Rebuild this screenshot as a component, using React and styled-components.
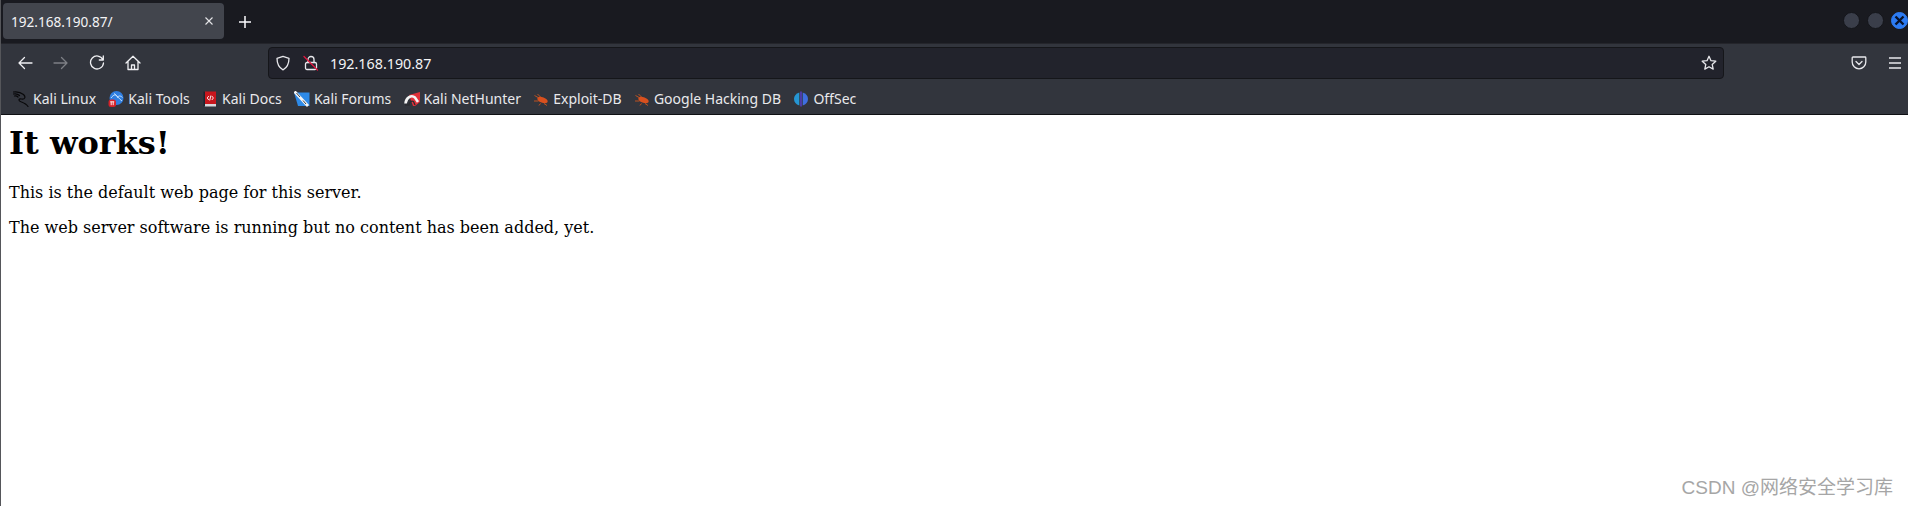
import React from "react";
import styled, { createGlobalStyle } from "styled-components";

const Global = createGlobalStyle`
  html, body { margin: 0; padding: 0; background: #fff; }
  #root { width: 1908px; height: 506px; overflow: hidden; }
`;
const UI = `"Noto Sans", "Open Sans", sans-serif`;

const Window = styled.div`
  position: relative; width: 1908px; height: 506px; overflow: hidden;
  display: flex; flex-direction: column; background: #fff;
  border-left: 1px solid #55565a; box-sizing: border-box;
`;
const TabBar = styled.div`
  height: 43px; flex: none; box-sizing: border-box; background: #191a20;
  display: flex; align-items: flex-start; padding: 3px 0 0 2px;
`;
const Tab = styled.div`
  width: 221px; height: 36px; box-sizing: border-box; border-radius: 4px; background: #42454d;
  color: #f3f3f5; font: 13.6px ${UI}; display: flex; align-items: center;
  justify-content: space-between; padding: 0 10px 0 8px;
`;
const NewTab = styled.div`
  width: 16px; height: 16px; margin: 11px 0 0 13px; color: #fbfbfe; display: flex;
`;
const WindowControls = styled.div`
  margin-left: auto; margin-top: 9px; display: flex; gap: 7px; flex: none;
`;
const Dot = styled.div`
  width: 17px; height: 17px; border-radius: 50%; flex: none; box-sizing: border-box;
  background: ${p => (p.$active ? "#2c7bf2" : "#3a3e4a")};
  border: 1px solid ${p => (p.$active ? "#2c7bf2" : "#14151a")};
  display: flex; align-items: center; justify-content: center;
`;
const NavBar = styled.div`
  height: 38px; flex: none; box-sizing: border-box; background: #32353d; border-top: 1px solid #24252b;
  padding: 1px 4px 0 16px; display: flex; align-items: center;
`;
const NavButton = styled.div`
  width: 16px; height: 16px; margin-right: ${p => p.$gap ?? 20}px; display: flex; flex: none;
  color: ${p => (p.$dim ? "#7d7f85" : "#f0f0f3")};
`;
const UrlBar = styled.div`
  width: 1456px; height: 32px; margin-left: 127px; flex: none; box-sizing: border-box;
  border: 1px solid #15161a; border-radius: 4px; background: #22232c; color: #f3f3f5;
  display: flex; align-items: center; padding: 0 6px; font: 14.3px ${UI};
`;
const UrlIcon = styled.div`
  width: 16px; height: 16px; margin-right: ${p => p.$gap ?? 12}px; display: flex; flex: none; color: #e8e8ec;
`;
const UrlText = styled.span`
  flex: 1;
`;
const NavRight = styled.div`
  margin-left: auto; display: flex; gap: 20px; color: #f0f0f3; margin-right: 1px;
`;
const Bookmarks = styled.div`
  height: 34px; flex: none; box-sizing: border-box; background: #32353d; border-bottom: 1px solid #0f1014;
  display: flex; align-items: center; padding: 2px 0 0 12px; gap: 12.3px;
  font: 14px ${UI}; color: #e9e9ec;
`;
const Bookmark = styled.div`
  display: flex; align-items: center; gap: 4px; white-space: nowrap;
`;
const BIcon = styled.svg`
  width: 16px; height: 16px; flex: none;
`;
const Page = styled.main`
  flex: 1; padding: 0 8px; font-family: "DejaVu Serif", serif; color: #000; background: #fff;
`;
const Title = styled.h1`
  font-size: 32px; font-weight: 700; line-height: 38px; margin: 9px 0 21px;
`;
const Para = styled.p`
  font-size: 16px; line-height: 19px; margin: 0 0 16px;
`;
const Watermark = styled.div`
  position: absolute; right: 15px; bottom: 7px; color: #a6a6a6;
  font: 19px "Liberation Sans", "Noto Sans CJK SC", sans-serif;
`;
const Stroke = p => (
  <svg width="100%" height="100%" viewBox="0 0 16 16" fill="none" stroke="currentColor" strokeWidth="1.3" strokeLinecap="round" strokeLinejoin="round" {...p} />
);

const Kali = () => (
  <BIcon viewBox="0 0 16 16" fill="none" stroke="#08080a" strokeWidth="1.2" strokeLinecap="round">
    <path d="M0.5 1C4 0.5 8 1.5 10.5 3.5C13 6 12 8.5 8.5 8C5.5 7.5 5 9.5 8 10.8C11 12 13.5 13 15 15.5" />
    <path d="M0.5 3C3 2.5 5 3 6.5 4.5M1.5 5C3 4.5 4 5 5 6" />
  </BIcon>
);
const Tools = () => (
  <BIcon viewBox="0 0 16 16">
    <circle cx="8.5" cy="7" r="7" fill="#2f7ee0" />
    <path d="M3 7C6 3 8 3 9.5 6.5C10.5 4.5 12.5 4.5 14.500 6.5M6 2.5C9 4 11 8 14 10" fill="none" stroke="#cfe6ff" strokeWidth="0.9" />
    <rect x="0.5" y="8.5" width="7.5" height="7.5" rx="2.5" fill="#d4222a" />
    <path d="M2.2 10.8h4M3.2 10.8v3.4M5.2 10.8v3.4" stroke="#fff" strokeWidth="0.9" />
  </BIcon>
);
const Docs = () => (
  <BIcon viewBox="0 0 16 16">
    <rect x="2.5" y="0.5" width="11.5" height="13" fill="#c8161d" />
    <rect x="2.5" y="13" width="11.5" height="2.5" fill="#d8d8dc" />
    <rect x="1.5" y="0.5" width="1.5" height="15" fill="#1c2430" />
    <path d="M6.8 5L5.2 7l1.6 2M9.8 5L11.4 7 9.8 9M8.9 4.5L7.7 9.5" fill="none" stroke="#fff" strokeWidth="0.9" />
  </BIcon>
);
const Forums = () => (
  <BIcon viewBox="0 0 16 16">
    <path d="M0 1.5h15.5V15H4z" fill="#2d8ae8" />
    <path d="M0.5 0.5L14 15" stroke="#f5f5f5" strokeWidth="2.8" />
    <path d="M2.5 2L6 6M9 9.5L12 13" stroke="#23272e" strokeWidth="0.9" />
  </BIcon>
);
const Hunter = () => (
  <BIcon viewBox="0 0 16 16">
    <path d="M5 4L16 1V11L11 15H9z" fill="#e0313a" />
    <path d="M1.5 12.5C2 6.5 7.5 3.5 11 6.5L14 11" fill="none" stroke="#f4f4f4" strokeWidth="2.6" />
    <path d="M1 14H5C5.5 11 7 9.5 9.5 10.5L11 14" fill="none" stroke="#2a2b30" strokeWidth="1.3" />
  </BIcon>
);
const Bug = () => (
  <BIcon viewBox="0 0 16 16">
    <ellipse cx="9.5" cy="9" rx="5.5" ry="2.8" fill="#d9501e" transform="rotate(22 9.5 9)" />
    <path d="M1.5 4.5L6 7M4.5 3L8 6.5M1 10H5.5M11 12.5L14 14.5M7.5 12.5L6 14.5" stroke="#c9551f" strokeWidth="0.9" />
  </BIcon>
);
const OffSec = () => (
  <BIcon viewBox="0 0 16 16">
    <path d="M6.3 1.5C3 2.5 1 5 1 8s2 5.5 5.3 6.5z" fill="#2596d4" />
    <path d="M9.7 1.5C13 2.5 15 5 15 8s-2 5.5-5.3 6.5z" fill="#3f6fe0" />
    <rect x="7.3" y="0.5" width="1.4" height="15" fill="#5b3fd0" />
  </BIcon>
);

const items = [
  [Kali, "Kali Linux"], [Tools, "Kali Tools"], [Docs, "Kali Docs"], [Forums, "Kali Forums"],
  [Hunter, "Kali NetHunter"], [Bug, "Exploit-DB"], [Bug, "Google Hacking DB"], [OffSec, "OffSec"],
];

export default function App() {
  return (
    <>
      <Global />
      <Window>
        <TabBar>
          <Tab>
            <span>192.168.190.87/</span>
            <svg width="10" height="10" viewBox="0 0 10 10" stroke="#e6e6e9" strokeWidth="1.1"><path d="M1.5 1.5l7 7M8.5 1.5l-7 7" /></svg>
          </Tab>
          <NewTab><Stroke strokeWidth="1.5" strokeLinecap="butt"><path d="M8 2v12M2 8h12" /></Stroke></NewTab>
          <WindowControls>
            <Dot />
            <Dot />
            <Dot $active>
              <svg width="11" height="11" viewBox="0 0 11 11" stroke="#07122a" strokeWidth="2.4"><path d="M1.5 1.5l8 8M9.5 1.5l-8 8" /></svg>
            </Dot>
          </WindowControls>
        </TabBar>
        <NavBar>
          <NavButton><Stroke><path d="M15 8H2M7.5 2.5L2 8l5.5 5.5" /></Stroke></NavButton>
          <NavButton $dim><Stroke><path d="M1 8h13M8.5 2.5L14 8l-5.5 5.5" /></Stroke></NavButton>
          <NavButton><Stroke><path d="M13.8 4.5A6.5 6.5 0 1 0 14.5 8M14.3 1v4h-4" /></Stroke></NavButton>
          <NavButton $gap={0}><Stroke><path d="M1 8L8 1.2 15 8M3 6.5V14.5H13V6.5M6.5 14.5V10H9.5V14.5" /></Stroke></NavButton>
          <UrlBar>
            <UrlIcon><Stroke><path d="M8 1.3L14 3.3C14 9 12.5 12.5 8 14.8 3.5 12.5 2 9 2 3.3z" /></Stroke></UrlIcon>
            <UrlIcon $gap={11}>
              <Stroke>
                <rect x="2.5" y="7.5" width="11" height="7" rx="1.5" />
                <path d="M5 7.5V4.5a3 3 0 0 1 6 0v3" />
                <path d="M1 1.5L14.5 15" stroke="#e0173f" />
              </Stroke>
            </UrlIcon>
            <UrlText>192.168.190.87</UrlText>
            <UrlIcon $gap={0}><Stroke><path d="M8 1.3l2 4.4 4.8.5-3.6 3.2 1 4.7L8 11.7l-4.2 2.4 1-4.7L1.2 6.2 6 5.7z" /></Stroke></UrlIcon>
          </UrlBar>
          <NavRight>
            <UrlIcon $gap={0}><Stroke><path d="M2 2h12a.8.8 0 0 1 .8.8V7A6.8 6.8 0 0 1 1.2 7V2.8A.8.8 0 0 1 2 2zM5 6.5l3 3 3-3" /></Stroke></UrlIcon>
            <UrlIcon $gap={0}><Stroke strokeLinecap="butt"><path d="M2 3h12M2 8h12M2 13h12" /></Stroke></UrlIcon>
          </NavRight>
        </NavBar>
        <Bookmarks>
          {items.map(([Icon, label]) => (
            <Bookmark key={label}><Icon />{label}</Bookmark>
          ))}
        </Bookmarks>
        <Page>
          <Title>It works!</Title>
          <Para>This is the default web page for this server.</Para>
          <Para>The web server software is running but no content has been added, yet.</Para>
        </Page>
        <Watermark>CSDN @网络安全学习库</Watermark>
      </Window>
    </>
  );
}
